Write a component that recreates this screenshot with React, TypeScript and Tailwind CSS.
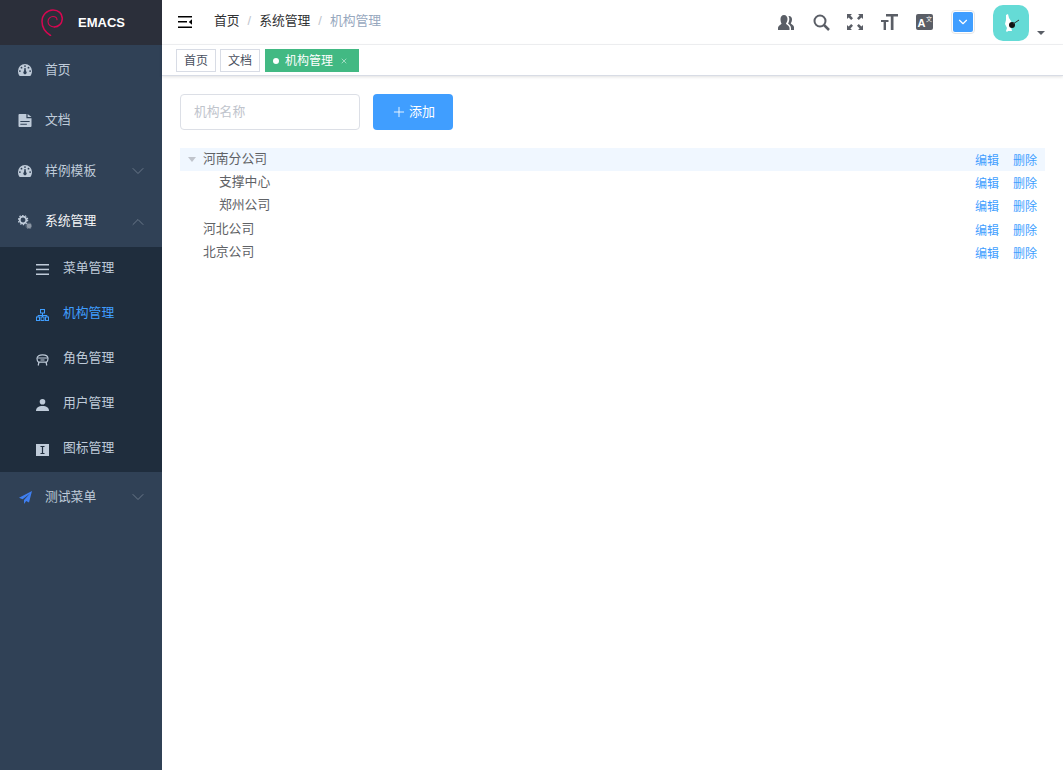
import React from 'react';
import { ChevronDown, ChevronUp, Plus, X } from 'lucide-react';

const font = { fontFamily: '"Liberation Sans", "Noto Sans CJK SC", sans-serif' };

function GaugeIcon() {
  return (
    <svg viewBox="0 0 14 12" className="w-[14px] h-[12px]" fill="currentColor">
      <path
        fillRule="evenodd"
        d="M7 0a7 7 0 0 1 7 7c0 1.600-.4 3.200-1.300 4.400-.2.3-.5.6-.9.6H2.200c-.4 0-.7-.3-.9-.6A7.500 7.500 0 0 1 0 7a7 7 0 0 1 7-7zM7 1.200a.9.9 0 1 0 0 1.800.9.9 0 0 0 0-1.800zM3.500 2.800a.9.9 0 1 0 0 1.800.9.9 0 0 0 0-1.800zM1.900 6.200a.9.9 0 1 0 0 1.800.9.9 0 0 0 0-1.800zM12.100 6.200a.9.9 0 1 0 0 1.800.9.9 0 0 0 0-1.800zM10.500 2.800a.9.9 0 1 0 0 1.800.9.9 0 0 0 0-1.800zM6.400 4 6 7.300a1.600 1.600 0 1 0 2 0L7.600 4z"
      />
    </svg>
  );
}

function DocIcon() {
  return (
    <svg viewBox="0 0 14 14" className="w-[14px] h-[13px]" fill="currentColor">
      <path
        fillRule="evenodd"
        d="M0 1a1 1 0 0 1 1-1h7.500v4.500H14V13a1 1 0 0 1-1 1H1a1 1 0 0 1-1-1V1zm2 6.500v1.200h10V7.500H2zm0 3v1.200h7v-1.200H2zM9.800 0 14 3.300H9.800V0z"
      />
    </svg>
  );
}

function GearsIcon() {
  return (
    <svg viewBox="0 0 14 14" className="w-[14px] h-[14px]">
      <circle cx="5" cy="5" r="3.300" fill="none" stroke="currentColor" strokeWidth="1.800" />
      <circle cx="5" cy="5" r="4.700" fill="none" stroke="currentColor" strokeWidth="1.200" strokeDasharray="1.500 1.450" />
      <circle cx="11" cy="11" r="2.400" fill="#8c97a5" />
      <circle cx="11" cy="11" r="3" fill="none" stroke="#8c97a5" strokeWidth="0.800" strokeDasharray="1.100 0.800" />
    </svg>
  );
}

function LinesIcon() {
  return (
    <svg viewBox="0 0 13 11" className="w-[13px] h-[11px]" fill="currentColor">
      <rect y="0" width="13" height="1.500" />
      <rect y="4.700" width="13" height="1.500" />
      <rect y="9.500" width="13" height="1.500" />
    </svg>
  );
}

function TreeIcon() {
  return (
    <svg viewBox="0 0 13 12" className="w-[13px] h-[12px]" fill="none" stroke="currentColor">
      <rect x="4.500" y="0.500" width="4" height="3.500" />
      <path d="M6.500 4v2.500M2 8V6.500h9V8M6.500 6.500V8" />
      <rect x="0.500" y="8" width="3" height="3.500" />
      <rect x="5" y="8" width="3" height="3.500" />
      <rect x="9.500" y="8" width="3" height="3.500" />
    </svg>
  );
}

function RoleIcon() {
  return (
    <svg viewBox="0 0 13 12" className="w-[13px] h-[12px]" fill="none" stroke="currentColor" strokeWidth="1.200">
      <path d="M1 4.500C1 2 3.500.8 6.500.8S12 2 12 4.500c0 2-.8 3.200-1.500 3.700h-8C1.800 7.700 1 6.500 1 4.500z" />
      <path d="M1.500 4h10M3 8l-.8 3.500M10 8l.8 3.500M4.500 6h4" />
    </svg>
  );
}

function UserIcon() {
  return (
    <svg viewBox="0 0 13 12" className="w-[13px] h-[12px]" fill="currentColor">
      <ellipse cx="6.500" cy="2.800" rx="2.800" ry="2.800" />
      <path d="M0 12c0-3.500 2.500-5 6.500-5s6.500 1.500 6.500 5H0z" />
    </svg>
  );
}

function GlyphIcon() {
  return (
    <svg viewBox="0 0 13 12" className="w-[13px] h-[12px]">
      <rect width="13" height="12" fill="currentColor" />
      <path d="M4.500 2.500h4M4.500 9.500h4M6.500 2.500v7" stroke="#1f2d3d" strokeWidth="1.200" fill="none" />
    </svg>
  );
}

function PlaneIcon() {
  return (
    <svg viewBox="0 0 13 13" className="w-[13px] h-[13px]" fill="#3f7ff0">
      <path d="M13 0 0 6.800l3.600 1.500L11 2.500 5 9v4l2.200-2.900 2.800 1.300L13 0z" />
    </svg>
  );
}

function Logo() {
  return (
    <svg viewBox="0 0 22 27" className="w-[22px] h-[27px]" fill="none" stroke="#d70751" strokeLinecap="round">
      <path d="M9.500 26.500C4 23 1 18 1 12.500 1 6 6 1 12 1c5.500 0 9.300 3.500 9.300 8.500 0 5-3.800 8.500-8 8.500" strokeWidth="1.500" />
      <path d="M13.300 18C9.500 18 7 15.500 7 12.500 7 9.500 9.500 7.500 12 7.500c2.500 0 4 1.500 4 3.300" strokeWidth="1.100" />
    </svg>
  );
}

function NavItem({ icon, label, arrow, active }: { icon: React.ReactNode; label: string; arrow?: 'up' | 'down'; active?: boolean }) {
  return (
    <div className="h-[50.500px] flex items-center pl-[18px] pr-[14px] text-[#bfcbd9]">
      <span className="w-[14px] flex justify-center shrink-0">{icon}</span>
      <span className={`ml-[13px] mb-[2px] text-[12.800px] flex-1 ${active ? 'text-[#f4f4f5]' : ''}`}>{label}</span>
      {arrow === 'down' && <ChevronDown size={20} strokeWidth={1.100} className="text-[#6e7c8d]" />}
      {arrow === 'up' && <ChevronUp size={20} strokeWidth={1.100} className="text-[#6e7c8d]" />}
    </div>
  );
}

function SubItem({ icon, label, active }: { icon: React.ReactNode; label: string; active?: boolean }) {
  return (
    <div className={`h-[45px] flex items-center pl-[36px] ${active ? 'text-[#409eff]' : 'text-[#bfcbd9]'}`}>
      <span className="w-[13px] flex justify-center shrink-0">{icon}</span>
      <span className="ml-[14px] mb-[3px] text-[12.800px]">{label}</span>
    </div>
  );
}

function Sidebar() {
  return (
    <aside className="w-[162px] shrink-0 bg-[#304156] flex flex-col">
      <div className="h-[45px] bg-[#2b2f3a] flex items-center pl-[41px]">
        <Logo />
        <span className="ml-[15px] text-[13px] font-bold text-white">EMACS</span>
      </div>
      <NavItem icon={<GaugeIcon />} label="首页" />
      <NavItem icon={<DocIcon />} label="文档" />
      <NavItem icon={<GaugeIcon />} label="样例模板" arrow="down" />
      <NavItem icon={<GearsIcon />} label="系统管理" arrow="up" active />
      <div className="bg-[#1f2d3d]">
        <SubItem icon={<LinesIcon />} label="菜单管理" />
        <SubItem icon={<TreeIcon />} label="机构管理" active />
        <SubItem icon={<RoleIcon />} label="角色管理" />
        <SubItem icon={<UserIcon />} label="用户管理" />
        <SubItem icon={<GlyphIcon />} label="图标管理" />
      </div>
      <NavItem icon={<PlaneIcon />} label="测试菜单" arrow="down" />
    </aside>
  );
}

function Navbar() {
  return (
    <header className="h-[45px] flex items-center border-b border-[#f1f2f4] pl-[16px] text-[#5a5e66]">
      <svg viewBox="0 0 14 12" className="w-[14px] h-[12px] text-black" fill="currentColor">
        <rect width="14" height="1.500" />
        <rect y="5" width="9" height="1.500" />
        <rect y="10.500" width="14" height="1.500" />
        <path d="M14 3.300v5.400L10.800 6z" />
      </svg>
      <nav className="ml-[22px] mb-[2px] flex items-center text-[12.800px]">
        <span className="text-[#303133]">首页</span>
        <span className="mx-[8px] text-[#c0c4cc]">/</span>
        <span className="text-[#303133]">系统管理</span>
        <span className="mx-[8px] text-[#c0c4cc]">/</span>
        <span className="text-[#97a8be]">机构管理</span>
      </nav>
      <div className="ml-auto flex items-center">
        <svg viewBox="0 0 16 15" className="w-[16px] h-[15px]" fill="currentColor">
          <path d="M6 0c2.200 0 3.500 1.800 3.500 4S8.500 7.500 8 8.500c0 1 3.500 2 3.500 4.500v2H0v-2c0-2.500 3.500-3.500 3.500-4.500C3 7.500 2.500 6.200 2.500 4 2.500 1.800 3.800 0 6 0z" />
          <path d="M11 1c1.800 0 3 1.400 3 3.200 0 1.800-.6 3.300-1.200 4 0 .8 3.200 1.600 3.200 4V15h-3v-2c0-2.500-2.600-4-3-4.500.7-1 1.300-2.700 1.300-4.500 0-1-.3-2-.8-2.800.4 0 .4-.2.500-.2z" />
        </svg>
        <svg viewBox="0 0 17 17" className="ml-[19px] w-[17px] h-[17px]" fill="none" stroke="currentColor" strokeWidth="2">
          <circle cx="7" cy="7" r="5.500" />
          <path d="M11 11l5 5" strokeWidth="2.500" />
        </svg>
        <svg viewBox="0 0 16 16" className="ml-[17px] w-[16px] h-[16px]" fill="currentColor">
          <path d="M0 0h5L3.400 1.600 6 4.200 4.200 6 1.600 3.400 0 5zM16 0v5l-1.600-1.600L11.800 6 10 4.200l2.600-2.600L11 0zM0 16v-5l1.600 1.600L4.200 10 6 11.800l-2.600 2.600L5 16zM16 16h-5l1.600-1.600L10 11.800l1.800-1.800 2.600 2.600L16 11z" />
        </svg>
        <svg viewBox="0 0 17 16" className="ml-[18px] w-[17px] h-[16px]" fill="currentColor">
          <path d="M5 0h12v2.500h-4.500V16H9.800V2.500H5z" />
          <path d="M0 6h7.500v2H5v8H2.600V8H0z" />
        </svg>
        <svg viewBox="0 0 17 16" className="ml-[18px] w-[17px] h-[16px]">
          <rect width="17" height="16" rx="2" fill="currentColor" />
          <text x="1.500" y="13" fontSize="11" fontWeight="700" fill="#fff" style={font}>A</text>
          <text x="10" y="7" fontSize="6" fill="#fff" style={font}>文</text>
        </svg>
        <div className="ml-[18px] w-[24px] h-[24px] rounded-[4px] border border-[#e6e6e6] bg-white flex items-center justify-center">
          <div className="w-[20px] h-[20px] rounded-[2px] bg-[#409eff] flex items-center justify-center">
            <ChevronDown size={14} strokeWidth={2} className="text-white" />
          </div>
        </div>
        <div className="ml-[18px] mt-[2px] w-[36px] h-[36px] rounded-[10px] bg-[#65dbd6] flex items-center justify-center">
          <svg viewBox="0 0 22 22" className="w-[22px] h-[22px]">
            <path d="M6 3l2-1 1 4 2 3 1 3-1 3 1 4H8l-1 1-1-1 1-3-2-4 1-4z" fill="#fff" />
            <circle cx="12" cy="13" r="3" fill="#111" />
            <path d="M13 12l6-4" stroke="#333" strokeWidth="1" />
          </svg>
        </div>
        <div className="ml-[8px] mr-[18px] mt-[21px] w-0 h-0 border-x-[4px] border-x-transparent border-t-[4px] border-t-[#5a5e66]" />
      </div>
    </header>
  );
}

function TagsBar() {
  return (
    <div className="h-[31px] flex items-start pt-[4px] pl-[14px] gap-[4px] border-b border-[#d8dce5] shadow-[0_1px_3px_rgba(0,0,0,0.12)]">
      <span className="h-[23px] px-[7px] flex items-center border border-[#d8dce5] text-[12px] text-[#495060]">首页</span>
      <span className="h-[23px] px-[7px] flex items-center border border-[#d8dce5] text-[12px] text-[#495060]">文档</span>
      <span className="ml-[1px] h-[23px] w-[94px] flex items-center bg-[#42b983] text-[12px] text-white pl-[8px]">
        <span className="w-[6px] h-[6px] rounded-full bg-white" />
        <span className="ml-[6px]">机构管理</span>
        <X size={8} strokeWidth={1.500} className="ml-[7px]" />
      </span>
    </div>
  );
}

const rows = [
  { name: '河南分公司', indent: 'pl-[23px]', caret: true, selected: true },
  { name: '支撑中心', indent: 'pl-[39px]' },
  { name: '郑州公司', indent: 'pl-[39px]' },
  { name: '河北公司', indent: 'pl-[23px] mt-[1px]' },
  { name: '北京公司', indent: 'pl-[23px]' },
];

function Tree() {
  return (
    <div className="mt-[18px] flex flex-col">
      {rows.map((row) => (
        <div
          key={row.name}
          className={`h-[23px] flex items-center pr-[8px] ${row.indent} ${row.selected ? 'bg-[#f0f7ff]' : ''}`}
        >
          <span className="flex-1 relative mb-[2px] text-[12.800px] text-[#606266]">
            {row.caret && (
              <span className="absolute left-[-15px] top-[8px] w-0 h-0 border-x-[4px] border-x-transparent border-t-[5px] border-t-[#c0c4cc]" />
            )}
            {row.name}
          </span>
          <span className="mt-[2px] text-[12px] text-[#409eff]">编辑</span>
          <span className="ml-[14px] mt-[2px] text-[12px] text-[#409eff]">删除</span>
        </div>
      ))}
    </div>
  );
}

export default function App() {
  return (
    <div className="flex h-[770px] bg-white overflow-hidden" style={font}>
      <Sidebar />
      <main className="flex-1 min-w-0 flex flex-col">
        <Navbar />
        <TagsBar />
        <div className="pt-[18px] pl-[18px] pr-[18px]">
          <div className="flex items-center">
            <input
              placeholder="机构名称"
              className="w-[180px] h-[36px] rounded-[4px] border border-[#dcdfe6] px-[13px] pb-[2px] text-[12.800px] outline-none placeholder:text-[#c0c4cc]"
            />
            <button className="ml-[13px] w-[80px] h-[36px] rounded-[4px] bg-[#409eff] text-white text-[13px] flex items-center justify-center">
              <Plus size={16} strokeWidth={1.300} />
              <span className="ml-[2px]">添加</span>
            </button>
          </div>
          <Tree />
        </div>
      </main>
    </div>
  );
}
